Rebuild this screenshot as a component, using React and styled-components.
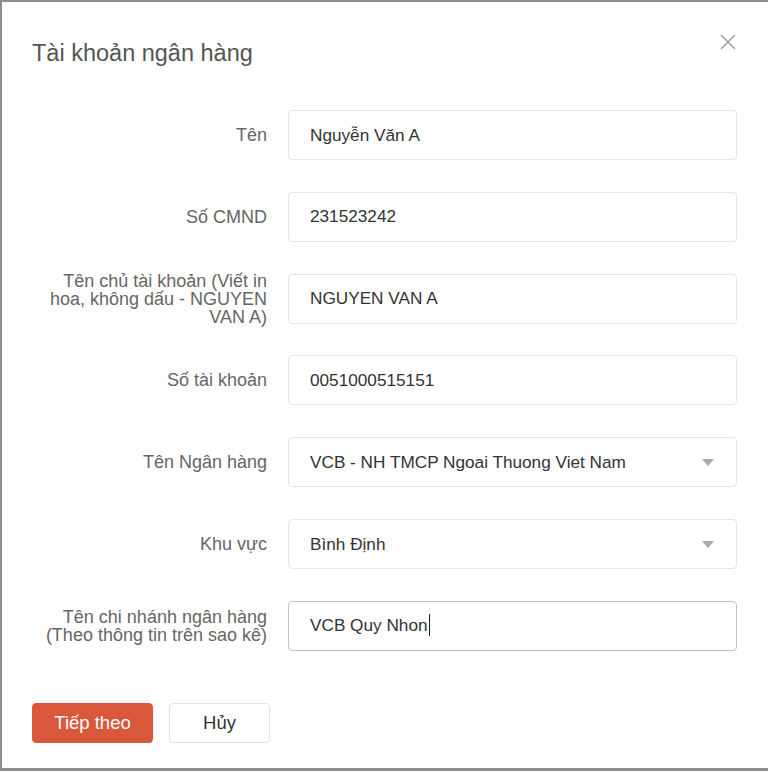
import React from 'react';
import styled, { createGlobalStyle } from 'styled-components';

const Global = createGlobalStyle`
  html, body { margin: 0; padding: 0; }
  body { font-family: "Liberation Sans", Arial, sans-serif; }
`;

const Page = styled.div`
  height: 100vh;
  box-sizing: border-box;
  background: #8e8e8e;
  padding: 2px 0 3px 2px;
  display: flex;
`;

const Modal = styled.div`
  flex: 1;
  background: #ffffff;
  padding: 35px 31px 0 30px;
  position: relative;
`;

const Title = styled.h2`
  margin: 0;
  font-size: 23.5px;
  line-height: 32px;
  font-weight: normal;
  color: #555;
`;

const Close = styled.button`
  position: absolute;
  top: 30px;
  right: 30px;
  width: 20px;
  height: 20px;
  padding: 0;
  border: none;
  background: none;
  display: flex;
  align-items: center;
  justify-content: center;
`;

const Form = styled.div`
  margin-top: 41px;
  display: flex;
  flex-direction: column;
  gap: 31.83px;
`;

const Row = styled.div`
  display: flex;
  gap: 21px;
  height: 50px;
  align-items: center;
`;

const Label = styled.div`
  flex: 0 0 235px;
  text-align: right;
  font-size: 18px;
  line-height: 18px;
  color: #666;
`;

const Field = styled.div`
  flex: 1;
  height: 50px;
  box-sizing: border-box;
  border: 1px solid ${p => (p.$focus ? '#c2c2c2' : '#e6e6e6')};
  border-radius: 4px;
  padding: 0 21px;
  display: flex;
  align-items: center;
  justify-content: space-between;
  font-size: 17.2px;
  color: #333;
`;

const Caret = styled.span`
  display: inline-block;
  width: 1px;
  height: 22px;
  background: #222;
  vertical-align: middle;
  margin-left: 1px;
  margin-top: -3px;
`;

const Arrow = styled.span`
  width: 0;
  height: 0;
  border-left: 6px solid transparent;
  border-right: 6px solid transparent;
  border-top: 7px solid #aaa;
  margin-right: 1px;
`;

const Actions = styled.div`
  margin-top: 52px;
  display: flex;
  gap: 16px;
`;

const Button = styled.button`
  height: 40px;
  width: ${p => p.$w}px;
  border-radius: 4px;
  font-family: inherit;
  font-size: 18.5px;
  border: 1px solid ${p => (p.$primary ? '#d9573b' : '#e2e2e2')};
  background: ${p => (p.$primary ? '#d9573b' : '#fff')};
  color: ${p => (p.$primary ? '#fff' : '#333')};
  padding: 0;
`;

const rows = [
  { label: 'Tên', value: 'Nguyễn Văn A' },
  { label: 'Số CMND', value: '231523242' },
  { label: 'Tên chủ tài khoản (Viết in hoa, không dấu - NGUYEN VAN A)', value: 'NGUYEN VAN A' },
  { label: 'Số tài khoản', value: '0051000515151' },
  { label: 'Tên Ngân hàng', value: 'VCB - NH TMCP Ngoai Thuong Viet Nam', select: true },
  { label: 'Khu vực', value: 'Bình Định', select: true },
  { label: 'Tên chi nhánh ngân hàng (Theo thông tin trên sao kê)', value: 'VCB Quy Nhon', focus: true },
];

export default function App() {
  return (
    <Page>
      <Global />
      <Modal>
        <Title>Tài khoản ngân hàng</Title>
        <Close aria-label="close">
          <svg width="16" height="16" viewBox="0 0 16 16">
            <path d="M1 1L15 15M15 1L1 15" stroke="#9a9a9a" strokeWidth="1.4" fill="none" />
          </svg>
        </Close>
        <Form>
          {rows.map(r => (
            <Row key={r.label}>
              <Label>{r.label}</Label>
              <Field $focus={r.focus}>
                <span>
                  {r.value}
                  {r.focus && <Caret />}
                </span>
                {r.select && <Arrow />}
              </Field>
            </Row>
          ))}
        </Form>
        <Actions>
          <Button $primary $w={121}>Tiếp theo</Button>
          <Button $w={101}>Hủy</Button>
        </Actions>
      </Modal>
    </Page>
  );
}
